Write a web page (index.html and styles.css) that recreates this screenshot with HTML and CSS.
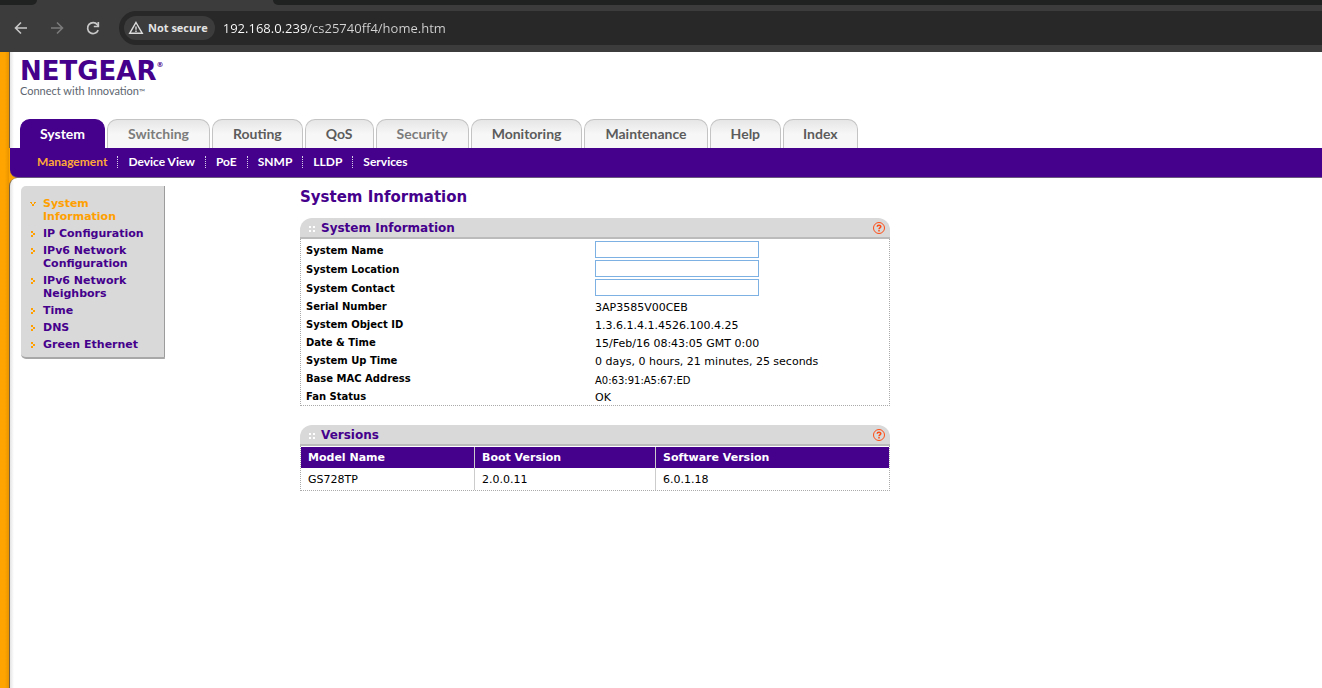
FILE: index.html
```html
<!DOCTYPE html>
<html lang="en">
<head>
<meta charset="utf-8">
<title>NETGEAR GS728TP</title>
<link rel="stylesheet" href="styles.css">
</head>
<body>
<div class="browser">
  <div class="tabstrip"><div class="strip-left"></div><div class="strip-active"></div><div class="strip-right"></div></div>
  <div class="toolbar">
    <button class="tool" type="button" aria-label="Back"><svg width="16" height="16" viewBox="0 0 16 16" fill="none" stroke="#c7c7c7" stroke-width="1.6"><path d="M14 8H3M8 2.5 2.5 8 8 13.5"/></svg></button>
    <button class="tool" type="button" aria-label="Forward"><svg width="16" height="16" viewBox="0 0 16 16" fill="none" stroke="#7b7b7b" stroke-width="1.6"><path d="M2 8h11M8 2.5 13.500 8 8 13.500"/></svg></button>
    <button class="tool" type="button" aria-label="Reload"><svg width="16" height="16" viewBox="0 0 16 16" fill="none" stroke="#c7c7c7" stroke-width="1.7"><path d="M13.200 10.200A5.500 5.500 0 1 1 12.400 4.600L13.600 6"/><path d="M13.300 2v4.500H8.800"/></svg></button>
    <div class="address">
      <button class="secure" type="button"><svg width="16" height="16" viewBox="0 0 16 16" fill="none" stroke="#dcdcdc" stroke-width="1.4"><path d="M8 2.500 14.300 13.300H1.700Z"/><path d="M8 6.500v3.200M8 10.500v1.500"/></svg>Not secure</button>
      <input class="url" type="text" aria-label="Address" value="192.168.0.239/cs25740ff4/home.htm">
    </div>
  </div>
</div>

<div class="page">
  <header class="top">
    <div class="brand">
      <div class="wordmark">NETGEAR<span class="reg">®</span></div>
      <div class="tagline">Connect with Innovation<span class="tm">™</span></div>
    </div>
    <nav class="tabs" aria-label="Main">
      <a class="tab active" href="#">System</a>
      <a class="tab light" href="#">Switching</a>
      <a class="tab" href="#">Routing</a>
      <a class="tab" href="#">QoS</a>
      <a class="tab light" href="#">Security</a>
      <a class="tab" href="#">Monitoring</a>
      <a class="tab" href="#">Maintenance</a>
      <a class="tab" href="#">Help</a>
      <a class="tab" href="#">Index</a>
    </nav>
  </header>
  <nav class="subnav" aria-label="System">
    <a class="current" href="#">Management</a>
    <a href="#">Device View</a>
    <a href="#">PoE</a>
    <a href="#">SNMP</a>
    <a href="#">LLDP</a>
    <a href="#">Services</a>
  </nav>

  <div class="body">
    <nav class="side" aria-label="Management">
      <a class="current" href="#"><svg width="6" height="6" viewBox="0 0 6 6"><path d="M0 1h2v1H0zM4 1h2v1H4zM1 2h1v1H1zM4 2h1v1H4zM2 3h2v2H2z"/></svg><span>System Information</span></a>
      <a href="#"><svg width="6" height="6" viewBox="0 0 6 6"><path d="M1 0h2v2H1zM3 2h2v2H3zM1 4h2v2H1z"/></svg><span>IP Configuration</span></a>
      <a href="#"><svg width="6" height="6" viewBox="0 0 6 6"><path d="M1 0h2v2H1zM3 2h2v2H3zM1 4h2v2H1z"/></svg><span>IPv6 Network Configuration</span></a>
      <a href="#"><svg width="6" height="6" viewBox="0 0 6 6"><path d="M1 0h2v2H1zM3 2h2v2H3zM1 4h2v2H1z"/></svg><span>IPv6 Network Neighbors</span></a>
      <a href="#"><svg width="6" height="6" viewBox="0 0 6 6"><path d="M1 0h2v2H1zM3 2h2v2H3zM1 4h2v2H1z"/></svg><span>Time</span></a>
      <a href="#"><svg width="6" height="6" viewBox="0 0 6 6"><path d="M1 0h2v2H1zM3 2h2v2H3zM1 4h2v2H1z"/></svg><span>DNS</span></a>
      <a href="#"><svg width="6" height="6" viewBox="0 0 6 6"><path d="M1 0h2v2H1zM3 2h2v2H3zM1 4h2v2H1z"/></svg><span>Green Ethernet</span></a>
    </nav>

    <main class="content">
      <h1>System Information</h1>

      <section class="panel">
        <div class="panel-head">
          <svg class="dots" width="6" height="6" viewBox="0 0 6 6"><path d="M0 0h2v2H0zM4 0h2v2H4zM0 4h2v2H0zM4 4h2v2H4z"/></svg>
          <h2>System Information</h2>
          <button class="help" type="button" aria-label="Help"><svg width="12" height="12" viewBox="0 0 12 12" fill="none" stroke="#ff4c14"><circle cx="6" cy="6" r="5.500"/><path stroke-width="1.500" d="M4.200 4.700C4.200 2.700 7.800 2.700 7.800 4.600 7.800 5.800 6 5.800 6 7.200M6 8.100v1.400"/></svg></button>
        </div>
        <table class="fields">
          <tr class="edit"><th scope="row"><label for="name">System Name</label></th><td><input id="name" type="text"></td></tr>
          <tr class="edit"><th scope="row"><label for="location">System Location</label></th><td><input id="location" type="text"></td></tr>
          <tr class="edit"><th scope="row"><label for="contact">System Contact</label></th><td><input id="contact" type="text"></td></tr>
          <tr><th scope="row">Serial Number</th><td>3AP3585V00CEB</td></tr>
          <tr><th scope="row">System Object ID</th><td>1.3.6.1.4.1.4526.100.4.25</td></tr>
          <tr><th scope="row">Date &amp; Time</th><td>15/Feb/16 08:43:05 GMT 0:00</td></tr>
          <tr><th scope="row">System Up Time</th><td>0 days, 0 hours, 21 minutes, 25 seconds</td></tr>
          <tr><th scope="row">Base MAC Address</th><td class="mac">A0:63:91:A5:67:ED</td></tr>
          <tr><th scope="row">Fan Status</th><td>OK</td></tr>
        </table>
      </section>

      <section class="panel">
        <div class="panel-head">
          <svg class="dots" width="6" height="6" viewBox="0 0 6 6"><path d="M0 0h2v2H0zM4 0h2v2H4zM0 4h2v2H0zM4 4h2v2H4z"/></svg>
          <h2>Versions</h2>
          <button class="help" type="button" aria-label="Help"><svg width="12" height="12" viewBox="0 0 12 12" fill="none" stroke="#ff4c14"><circle cx="6" cy="6" r="5.500"/><path stroke-width="1.500" d="M4.200 4.700C4.200 2.700 7.800 2.700 7.800 4.600 7.800 5.800 6 5.800 6 7.200M6 8.100v1.400"/></svg></button>
        </div>
        <table class="versions">
          <colgroup><col class="c-model"><col class="c-boot"><col></colgroup>
          <tr><th scope="col">Model Name</th><th scope="col">Boot Version</th><th scope="col">Software Version</th></tr>
          <tr><td>GS728TP</td><td>2.0.0.11</td><td>6.0.1.18</td></tr>
        </table>
      </section>
    </main>
  </div>
</div>
</body>
</html>
```
FILE: styles.css
```css
* { box-sizing: border-box; }

body {
  margin: 0;
  min-height: 100vh;
  display: flex;
  flex-direction: column;
  background: #fff;
  font: 11px/13px "DejaVu Sans", Verdana, sans-serif;
  color: #000;
}

a { text-decoration: none; color: inherit; }
button { border: 0; padding: 0; background: none; font: inherit; color: inherit; }

/* Browser frame */
.browser { background: #3c3c3c; }
.tabstrip { display: flex; height: 5px; background: #3c3c3c; }
.strip-left { width: 37px; background: #202221; border-radius: 0 0 8px 0; }
.strip-active { width: 236px; }
.strip-right { flex: 1; background: #202221; border-radius: 0 0 0 8px; }
.toolbar { display: flex; align-items: center; padding: 6px 0 7px 13px; gap: 20px; }
.tool { width: 16px; height: 16px; }
.tool svg, .secure svg, .help svg { display: block; }
.address {
  flex: 1;
  height: 34px;
  margin-left: -2px;
  padding-left: 5px;
  display: flex;
  align-items: center;
  gap: 8px;
  background: #282828;
  border-radius: 17px 0 0 17px;
}
.secure {
  display: flex;
  align-items: center;
  gap: 4px;
  height: 24px;
  padding: 0 7px 0 4px;
  border-radius: 12px;
  background: #3c3c3c;
  color: #e3e3e3;
  font: bold 11px/24px "Open Sans", "Noto Sans", sans-serif;
}
.url {
  flex: 1;
  border: 0;
  padding: 0;
  outline: 0;
  font: 13px/24px "Open Sans", "Noto Sans", sans-serif;
  color: transparent;
  caret-color: #fff;
  background: linear-gradient(to right, #fff 84px, #d4d4d4 84px);
  -webkit-background-clip: text;
  background-clip: text;
}

/* Page frame */
.page {
  flex: 1;
  display: flex;
  flex-direction: column;
  padding-left: 9px;
  background: linear-gradient(to right, #ffa400 5px, #e89400 9px, #ffa400 9px);
}
.top {
  background: linear-gradient(to right, #e4e4e4, #fff 4px);
  border-left: 1px solid #776040;
  padding: 5px 0 0 10px;
}
.brand { height: 62px; }
.wordmark {
  display: flex;
  align-items: flex-start;
  height: 28px;
  color: #45008c;
  font: bold 26px/28px "DejaVu Sans", Verdana, sans-serif;
}
.reg { font-size: 7px; line-height: 16px; }
.tagline { color: #5d6670; font: 11px/12px Lato, sans-serif; }
.tm { font-size: 8px; }

.tabs { display: flex; gap: 2px; }
.tab {
  height: 29px;
  padding: 0 20px;
  border: 1px solid #c4c4c4;
  border-bottom: 0;
  border-radius: 10px 10px 0 0;
  background: linear-gradient(#e6e6e6, #f7f7f7 14px);
  color: #5c5c5c;
  font: bold 14px/28px Lato, sans-serif;
  text-align: center;
}
.tab:last-child { padding: 0 19px; }
.tab.light { color: #7c7c7c; }
.tab.active { padding: 0 19px; background: #45008c; border-color: #45008c; color: #fff; }

.subnav {
  display: flex;
  align-items: center;
  margin-left: 1px;
  height: 30px;
  padding: 0 0 2px 16px;
  background: #45008c;
  border-bottom: 1px solid #6b5a80;
  border-radius: 0 0 0 8px;
  color: #fff;
  font: bold 12px/12px Lato, sans-serif;
}
.subnav a { padding: 0 10px; border-left: 1px dotted #d8d0e8; }
.subnav a.current { border-left-color: transparent; color: #ffa838; }

.body {
  flex: 1;
  display: flex;
  align-items: flex-start;
  background: linear-gradient(to right, #e4e4e4, #fff 4px);
  border-left: 1px solid #776040;
  border-radius: 8px 0 0 0;
  padding: 8px 12px 0 11px;
}

/* Side menu */
.side {
  flex: none;
  width: 144px;
  padding: 11px 8px 6px 9px;
  display: flex;
  flex-direction: column;
  gap: 4px;
  background: #d9d9d9;
  border-right: 1px solid #9c9c9c;
  border-bottom: 2px solid #a8a8a8;
  border-radius: 5px 0 0 5px;
  color: #45008c;
  font-weight: bold;
}
.side a { display: flex; align-items: flex-start; gap: 7px; }
.side svg { flex: none; margin-top: 4px; fill: #ffa000; }
.side .current { color: #ffa000; }

/* Main column */
.content { margin-left: 135px; width: 590px; }
h1 { margin: 0 0 10px; color: #45008c; font-size: 15px; line-height: 22px; }
h2 { margin: 0; color: #45008c; font-size: 12px; line-height: 18px; }

.panel { margin-bottom: 19px; }
.panel-head {
  display: flex;
  align-items: center;
  height: 21px;
  padding: 0 5px 0 9px;
  background: #d9d9d9;
  border-bottom: 2px solid #bbb;
  border-radius: 12px 12px 0 0;
}
.dots { margin: 3px 6px 0 0; fill: #fff; }
.help { margin-left: auto; }

table { width: 100%; border-collapse: collapse; }
th { text-align: left; }
.fields { display: block; border: 1px dotted #aaa; border-top: 0; padding: 1px 0 0; }
.fields tr { height: 18px; }
.fields tr.edit { height: 19px; }
.fields th { width: 294px; padding: 2px 0 0 5px; font-size: 10px; line-height: 14px; }
.fields td { padding: 2px 0 0; }
.fields .edit td { padding: 0; }
.fields td.mac { font-size: 10px; padding-top: 5px; }
.fields input {
  display: block;
  width: 164px;
  height: 17px;
  padding: 0 2px;
  border: 1px solid #7db1e4;
  background: #fff;
  font: inherit;
}

.versions {
  table-layout: fixed;
  border-collapse: separate;
  border-spacing: 0;
  border: 1px dotted #aaa;
  border-top: 0;
  padding-top: 1px;
}
.c-model { width: 173px; }
.c-boot { width: 181px; }
.versions th, .versions td { height: 21px; padding: 0 7px; border-left: 1px solid #ccc; }
.versions td { height: 22px; }
.versions th { background: #45008c; color: #fff; }
.versions th:first-child, .versions td:first-child { border-left: 0; }
```
